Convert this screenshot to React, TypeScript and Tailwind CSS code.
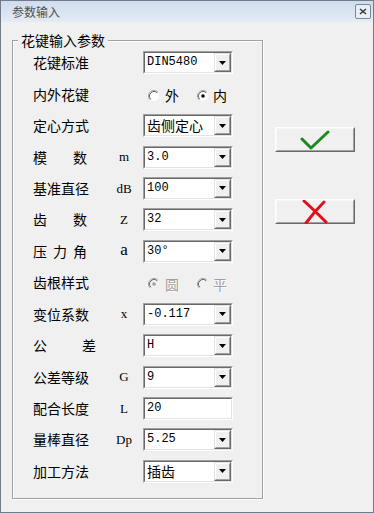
const cjk = "font-['Noto_Sans_CJK_SC',sans-serif]";
const mono = "font-['Liberation_Mono',monospace]";
const serif = "font-['Liberation_Serif',serif]";

function DropButton() {
  return (
    <div className="flex h-full w-[17px] border border-t-[#e3e3e3] border-l-[#e3e3e3] border-r-[#696969] border-b-[#696969]">
      <div className="flex flex-1 items-center justify-center border border-t-white border-l-white border-r-[#a0a0a0] border-b-[#a0a0a0] bg-[#f0f0f0]">
        <svg width="7" height="4" viewBox="0 0 7 4">
          <polygon points="0,0 7,0 3.5,4" fill="#000" />
        </svg>
      </div>
    </div>
  );
}

function Sunken({ children }: { children: React.ReactNode }) {
  return (
    <div className="flex h-[23px] w-[90px] border border-t-[#a0a0a0] border-l-[#a0a0a0] border-r-white border-b-white">
      <div className="flex flex-1 border border-t-[#696969] border-l-[#696969] border-r-[#e3e3e3] border-b-[#e3e3e3] bg-white">
        {children}
      </div>
    </div>
  );
}

function Combo({ value, cn }: { value: string; cn?: boolean }) {
  return (
    <Sunken>
      <span
        className={`flex-1 pl-[2px] text-[12px] leading-[19px] text-black ${
          cn ? `${cjk} text-[14px]` : mono
        }`}
      >
        {value}
      </span>
      <DropButton />
    </Sunken>
  );
}

function TextInput({ value }: { value: string }) {
  return (
    <Sunken>
      <span className={`flex-1 pl-[2px] text-[12px] leading-[19px] ${mono}`}>{value}</span>
    </Sunken>
  );
}

function Radio({ checked, disabled }: { checked?: boolean; disabled?: boolean }) {
  return (
    <svg width="12" height="12" viewBox="0 0 12 12">
      <circle cx="6" cy="6" r="5" fill={disabled ? "#f0f0f0" : "#fff"} />
      <path d="M2.11 9.89 A5.5 5.5 0 0 1 9.89 2.11" fill="none" stroke="#a0a0a0" strokeWidth="1" />
      <path d="M2.82 9.18 A4.5 4.5 0 0 1 9.18 2.82" fill="none" stroke="#696969" strokeWidth="1" />
      {checked && <circle cx="6" cy="6" r="1.8" fill={disabled ? "#a0a0a0" : "#000"} />}
    </svg>
  );
}

function RadioPair({
  a,
  b,
  checked,
  disabled,
}: {
  a: string;
  b: string;
  checked: 0 | 1;
  disabled?: boolean;
}) {
  const text = disabled
    ? "text-[#a0a0a0] [text-shadow:1px_1px_0_#fff]"
    : "text-black";
  return (
    <div className={`flex w-[90px] items-center pl-[5px] pt-[3px] text-[14px] ${cjk} ${text}`}>
      <Radio checked={checked === 0} disabled={disabled} />
      <span className="ml-[5px] w-[32px]">{a}</span>
      <Radio checked={checked === 1} disabled={disabled} />
      <span className="ml-[4px]">{b}</span>
    </div>
  );
}

type Row = {
  label: string[];
  labelW?: string;
  sym?: string;
  symCls?: string;
  control: React.ReactNode;
};

const rows: Row[] = [
  { label: ["花键标准"], control: <Combo value="DIN5480" /> },
  { label: ["内外花键"], control: <RadioPair a="外" b="内" checked={1} /> },
  { label: ["定心方式"], control: <Combo value="齿侧定心" cn /> },
  { label: ["模", "数"], labelW: "w-[54px]", sym: "m", control: <Combo value="3.0" /> },
  { label: ["基准直径"], sym: "dB", control: <Combo value="100" /> },
  { label: ["齿", "数"], labelW: "w-[54px]", sym: "Z", control: <Combo value="32" /> },
  {
    label: ["压", "力", "角"],
    labelW: "w-[54px]",
    sym: "a",
    symCls: "text-[17px] leading-[17px] -mt-[3px]",
    control: <Combo value="30°" />,
  },
  { label: ["齿根样式"], control: <RadioPair a="圆" b="平" checked={0} disabled /> },
  { label: ["变位系数"], sym: "x", control: <Combo value="-0.117" /> },
  { label: ["公", "差"], labelW: "w-[63px]", control: <Combo value="H" /> },
  { label: ["公差等级"], sym: "G", control: <Combo value="9" /> },
  { label: ["配合长度"], sym: "L", control: <TextInput value="20" /> },
  { label: ["量棒直径"], sym: "Dp", control: <Combo value="5.25" /> },
  { label: ["加工方法"], control: <Combo value="插齿" cn /> },
];

function ClassicButton({ children }: { children: React.ReactNode }) {
  return (
    <div className="flex h-[25px] w-[80px] border border-t-white border-l-white border-r-[#696969] border-b-[#696969]">
      <div className="flex flex-1 items-center justify-center border border-t-[#f8f8f8] border-l-[#f8f8f8] border-r-[#a0a0a0] border-b-[#a0a0a0] bg-[#f0f0f0]">
        {children}
      </div>
    </div>
  );
}

export default function App() {
  return (
    <div className="flex h-[513px] w-[374px] flex-col border border-[#6f7c8c] bg-[#f0f0f0]">
      <div className="flex h-[21px] items-center justify-between bg-gradient-to-b from-[#d0dced] to-[#e4ebf5] pl-[11px] pr-[2px]">
        <span className={`text-[12px] text-[#505050] ${cjk}`}>参数输入</span>
        <div className="flex h-[15px] w-[16px] items-center justify-center rounded-[2px] border border-[#7c8898] bg-[#e8eef6]">
          <svg width="8" height="7" viewBox="0 0 8 7">
            <path d="M1 1 L7 6 M7 1 L1 6" stroke="#3a3a3a" strokeWidth="1.6" />
          </svg>
        </div>
      </div>

      <div className="flex flex-1 pl-[11px]">
        <div className="relative mt-[18px] h-[459px] w-[251px] border border-[#a0a0a0] shadow-[inset_1px_1px_0_#fff,1px_1px_0_#fff]">
          <span
            className={`absolute -top-[11px] left-[5px] bg-[#f0f0f0] px-[3px] text-[14px] leading-[20px] text-black ${cjk}`}
          >
            花键输入参数
          </span>
          <div className="flex flex-col pt-[6px]">
            {rows.map((r, i) => (
              <div key={i} className="flex h-[31.45px] items-center pl-[20px]">
                <div
                  className={`flex w-[75px] text-[14px] text-black ${cjk}`}
                >
                  <div className={`flex justify-between ${r.labelW ?? ""}`}>
                    {r.label.map((t, j) => (
                      <span key={j}>{t}</span>
                    ))}
                  </div>
                </div>
                <div
                  className={`w-[32px] text-center text-[13px] text-black ${serif} ${r.symCls ?? ""}`}
                >
                  {r.sym ?? ""}
                </div>
                <div className="ml-[3px]">{r.control}</div>
              </div>
            ))}
          </div>
        </div>

        <div className="ml-[12px] mt-[105px] flex flex-col gap-[47px]">
          <ClassicButton>
            <svg width="30" height="20" viewBox="0 0 30 20">
              <path
                d="M2 9 L11 18 L28 2"
                fill="none"
                stroke="#1a8a1a"
                strokeWidth="3"
                strokeLinecap="round"
                strokeLinejoin="round"
              />
            </svg>
          </ClassicButton>
          <ClassicButton>
            <svg width="28" height="24" viewBox="0 0 28 24">
              <path
                d="M3 1 Q14 11 25 22 M23 2 Q13 12 5 23"
                fill="none"
                stroke="#e0101a"
                strokeWidth="3"
                strokeLinecap="round"
              />
            </svg>
          </ClassicButton>
        </div>
      </div>
    </div>
  );
}
